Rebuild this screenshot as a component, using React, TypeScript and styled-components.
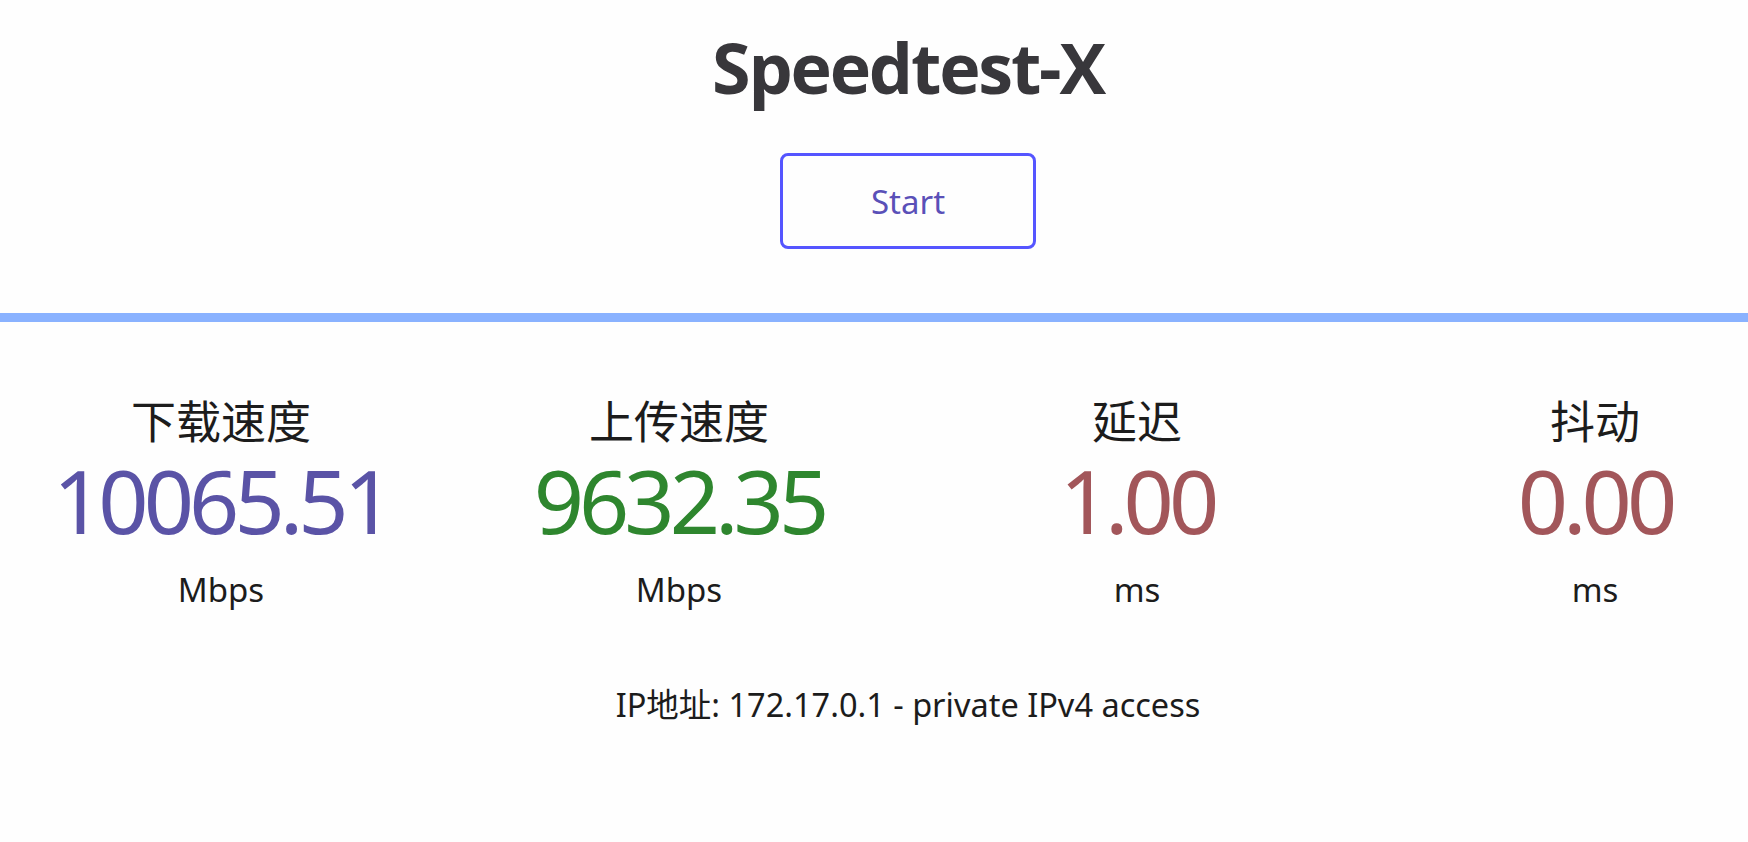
import styled, { createGlobalStyle } from 'styled-components';

type Stat = {
  label: string;
  value: string;
  unit: string;
  color: string;
};

const stats: Stat[] = [
  { label: '下载速度', value: '10065.51', unit: 'Mbps', color: '#5a53a6' },
  { label: '上传速度', value: '9632.35', unit: 'Mbps', color: '#2e862e' },
  { label: '延迟', value: '1.00', unit: 'ms', color: '#a2565a' },
  { label: '抖动', value: '0.00', unit: 'ms', color: '#a2565a' },
];

const App = () => {
  return (
    <>
      <GlobalStyle />
      <Page>
        <Header>
          <Title>Speedtest-X</Title>
          <StartButton type="button">Start</StartButton>
        </Header>
        <Divider />
        <StatsGrid>
          {stats.map((s) => (
            <StatItem key={s.label}>
              <StatLabel>{s.label}</StatLabel>
              <StatValue $color={s.color}>{s.value}</StatValue>
              <StatUnit>{s.unit}</StatUnit>
            </StatItem>
          ))}
        </StatsGrid>
        <IpInfo>IP地址: 172.17.0.1 - private IPv4 access</IpInfo>
      </Page>
    </>
  );
};

const GlobalStyle = createGlobalStyle`
  body {
    margin: 0;
    background: #fefefe;
    overflow: hidden;
    font-family: "Noto Sans", "Noto Sans CJK SC", sans-serif;
    color: #1a1a1a;
  }
`;

const Page = styled.div`
  width: 1832px;
  margin-left: -8px;
`;

const Header = styled.header`
  display: flex;
  flex-direction: column;
  align-items: center;
  padding-top: 27px;
`;

const Title = styled.h1`
  margin: 0;
  font-family: "Open Sans", sans-serif;
  font-weight: 700;
  font-size: 70px;
  line-height: 80px;
  letter-spacing: -2.2px;
  color: #38373b;
`;

const StartButton = styled.button`
  margin-top: 46px;
  width: 256px;
  height: 96px;
  border: 3px solid #5555ff;
  border-radius: 8px;
  background: transparent;
  font-family: "Noto Sans", sans-serif;
  font-size: 33px;
  color: #5a50b8;
  cursor: pointer;
`;

const Divider = styled.div`
  margin-top: 64px;
  height: 9px;
  background: #8ab2ff;
`;

const StatsGrid = styled.section`
  display: grid;
  grid-template-columns: repeat(4, 1fr);
  padding-top: 74px;
`;

const StatItem = styled.div`
  display: flex;
  flex-direction: column;
  align-items: center;
`;

const StatLabel = styled.div`
  font-size: 45px;
  line-height: 52px;
  color: #1c1c1c;
`;

const StatValue = styled.div<{ $color: string }>`
  margin-top: 4px;
  font-size: 88px;
  line-height: 96px;
  letter-spacing: -5px;
  color: ${(p) => p.$color};
`;

const StatUnit = styled.div`
  margin-top: 22px;
  font-size: 33px;
  line-height: 40px;
  color: #1c1c1c;
`;

const IpInfo = styled.p`
  margin: 75px 0 0;
  text-align: center;
  font-size: 32.5px;
  line-height: 40px;
  color: #1c1c1c;
`;

export default App;
